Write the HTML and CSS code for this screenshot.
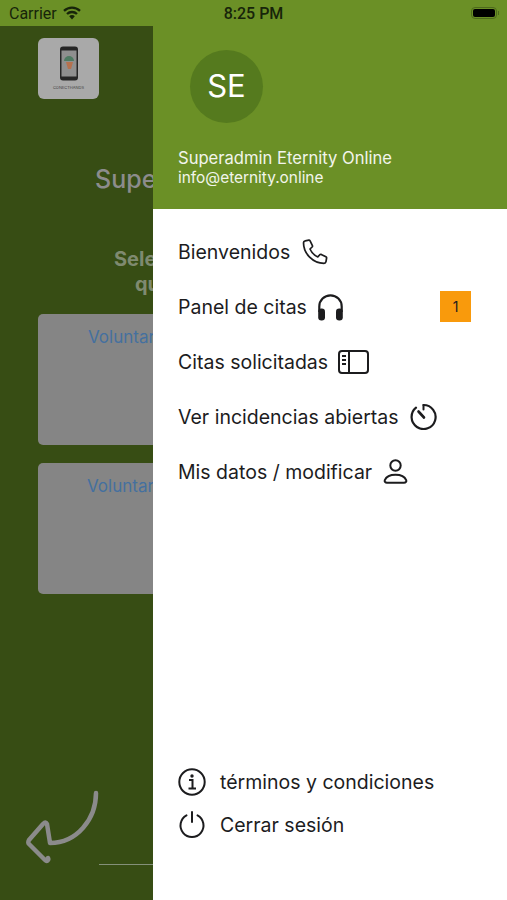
FILE: index.html
```html
<!DOCTYPE html>
<html lang="es">
<head>
    <meta charset="UTF-8">
    <meta name="viewport" content="width=device-width, initial-scale=1.0">
    <title>Menú</title>
    <link rel="stylesheet" href="styles.css">
</head>
<body>
    <div class="status">
        <div class="status-left">
            <span>Carrier</span>
            <svg class="wifi" width="18" height="14" viewBox="0 0 18 14">
                <path d="M1 4.8a11.5 11.5 0 0 1 16 0" fill="none" stroke="#17240a" stroke-width="2.3"/>
                <path d="M4 8a7.2 7.2 0 0 1 10 0" fill="none" stroke="#17240a" stroke-width="2.3"/>
                <path d="M6.2 10.3a3.6 3.6 0 0 1 5.6 0L9 13.6z" fill="#17240a"/>
            </svg>
        </div>
        <div class="status-time">8:25 PM</div>
        <div class="status-right">
            <div class="battery"><div class="battery-fill"></div></div>
            <div class="battery-cap"></div>
        </div>
    </div>

    <div class="main">
        <div class="behind">
            <div class="behind-inner">
                <div class="logo">
                    <svg width="20" height="35" viewBox="0 0 20 35">
                        <rect x="1" y="0.500" width="18" height="34" rx="3" fill="#262626"/>
                        <rect x="2.500" y="4.500" width="15" height="26" fill="#8f8f8f"/>
                        <path d="M5 15a5 5 0 0 1 10 0z" fill="#4e7a62"/>
                        <path d="M7 16h7l-2 7H9z" fill="#b5714e"/>
                    </svg>
                    <div class="logo-text">CONECTHANDS</div>
                </div>
                <h1 class="title">Supe</h1>
                <p class="subtitle">
                    <span class="subtitle-top">Sele</span>
                    <span class="subtitle-bottom">qu</span>
                </p>
                <div class="card"><span class="card-link">Voluntar</span></div>
                <div class="card card-second"><span class="card-link">Voluntar</span></div>
            </div>
            <svg class="back-arrow" width="80" height="75" viewBox="0 0 80 75">
                <path d="M71 4C71 30 52 54 25 54L22 35C21 33 20 33 18 35L4 51C3 53 3 54 4 55L20 71C22 73 24 71 23 69" fill="none" stroke="#8b8b8b" stroke-width="4.500" stroke-linecap="round" stroke-linejoin="round"/>
            </svg>
            <div class="bottom-line"></div>
        </div>

        <div class="drawer">
            <div class="drawer-head">
                <div class="avatar">SE</div>
                <div class="user-name">Superadmin Eternity Online</div>
                <div class="user-mail">info@eternity.online</div>
            </div>

            <div class="menu">
                <div class="menu-row">
                    <span>Bienvenidos</span>
                    <svg class="icon icon-far" width="26" height="26" viewBox="0 0 26 26">
                        <path d="M3.200 1.800 6.800 1.200c.6-.1 1 .2 1.300.7l2.300 4.700c.2.500.1 1-.3 1.400L8 10c1.500 3.500 4.300 6.300 7.800 7.900l2-2.200c.4-.4.900-.5 1.400-.3l4.700 2.300c.5.300.8.800.7 1.300l-.6 3.600c-.2 1-1 1.700-2 1.700C11 24.300 1.500 14.700 1.500 3.800c0-1 .7-1.800 1.700-2z" fill="none" stroke="#1c1c1e" stroke-width="1.700" stroke-linejoin="round"/>
                    </svg>
                </div>
                <div class="menu-row">
                    <span>Panel de citas</span>
                    <svg class="icon icon-close" width="27" height="28" viewBox="0 0 27 28">
                        <path d="M2.300 19V13.500a11.200 11.200 0 0 1 22.400 0V19" fill="none" stroke="#1c1c1e" stroke-width="2.200"/>
                        <rect x="1.200" y="15.500" width="6.800" height="12" rx="3.200" fill="#1c1c1e"/>
                        <rect x="19" y="15.500" width="6.800" height="12" rx="3.200" fill="#1c1c1e"/>
                    </svg>
                    <div class="badge">1</div>
                </div>
                <div class="menu-row">
                    <span>Citas solicitadas</span>
                    <svg class="icon icon-close" width="31" height="24" viewBox="0 0 31 24">
                        <rect x="1" y="1" width="29" height="22" rx="3" fill="none" stroke="#1c1c1e" stroke-width="2"/>
                        <path d="M11 1v22" stroke="#1c1c1e" stroke-width="2"/>
                        <path d="M4 6h4M4 10h4M4 14h4" stroke="#1c1c1e" stroke-width="1.800"/>
                    </svg>
                </div>
                <div class="menu-row">
                    <span>Ver incidencias abiertas</span>
                    <svg class="icon" width="27" height="27" viewBox="0 0 27 27">
                        <path d="M13.500 2a12 12 0 1 1-7.500 2.700" fill="none" stroke="#1c1c1e" stroke-width="2.200" stroke-linecap="round"/>
                        <path d="M13.500 2v4.500" stroke="#1c1c1e" stroke-width="2" stroke-linecap="round"/>
                        <path d="M8.500 8.500 14 14.500" stroke="#1c1c1e" stroke-width="2.600" stroke-linecap="round"/>
                    </svg>
                </div>
                <div class="menu-row">
                    <span>Mis datos / modificar</span>
                    <svg class="icon" width="25" height="25" viewBox="0 0 25 25">
                        <circle cx="12.500" cy="6.500" r="5.200" fill="none" stroke="#1c1c1e" stroke-width="2"/>
                        <path d="M4 23.800h17c1.800 0 2.800-1.300 2.200-2.700-1.400-3.300-5.500-5.300-10.700-5.300S3.200 17.800 1.800 21.100c-.6 1.400.4 2.700 2.200 2.700z" fill="none" stroke="#1c1c1e" stroke-width="2"/>
                    </svg>
                </div>
            </div>

            <div class="foot">
                <div class="foot-row">
                    <svg width="28" height="28" viewBox="0 0 28 28">
                        <circle cx="14" cy="14" r="12.700" fill="none" stroke="#1c1c1e" stroke-width="2"/>
                        <circle cx="14" cy="8" r="1.700" fill="#1c1c1e"/>
                        <path d="M11 12h3.500v8M10.500 20.500h7.500" fill="none" stroke="#1c1c1e" stroke-width="2"/>
                    </svg>
                    <span>términos y condiciones</span>
                </div>
                <div class="foot-row">
                    <svg width="28" height="28" viewBox="0 0 28 28">
                        <path d="M8.500 4.400a11.500 11.500 0 1 0 11 0" fill="none" stroke="#1c1c1e" stroke-width="2" stroke-linecap="round"/>
                        <path d="M14 1v10" stroke="#1c1c1e" stroke-width="2" stroke-linecap="round"/>
                    </svg>
                    <span>Cerrar sesión</span>
                </div>
            </div>
        </div>
    </div>
</body>
</html>
```

FILE: styles.css
```css
* {
    box-sizing: border-box;
}
body {
    font-family: Inter, "Liberation Sans", sans-serif;
    background-color: #6b9026;
    margin: 0;
    height: 900px;
    display: flex;
    flex-direction: column;
    overflow: hidden;
    color: #1c1c1e;
}
.status {
    height: 26px;
    flex-shrink: 0;
    display: flex;
    align-items: center;
    justify-content: space-between;
    padding: 0 8px 0 9px;
    position: relative;
    font-family: Roboto, sans-serif;
    font-size: 16px;
    color: #17240a;
}
.status-left {
    display: flex;
    align-items: center;
    gap: 6px;
}
.status-time {
    position: absolute;
    left: 0;
    right: 0;
    text-align: center;
    font-weight: 500;
}
.status-right {
    display: flex;
    align-items: center;
    gap: 1px;
}
.battery {
    width: 26px;
    height: 12px;
    border: 1px solid #4d6a1c;
    border-radius: 4px;
    padding: 1px;
}
.battery-fill {
    height: 100%;
    background: #000;
    border-radius: 2px;
}
.battery-cap {
    width: 1px;
    height: 4px;
    background: #4d6a1c;
}
.main {
    flex: 1;
    display: flex;
    min-height: 0;
}
.behind {
    width: 153px;
    flex-shrink: 0;
    background: #374d14;
    overflow: hidden;
    position: relative;
}
.behind-inner {
    padding: 12px 0 0 38px;
}
.logo {
    width: 61px;
    height: 61px;
    background: #a9a9a9;
    border-radius: 6px;
    display: flex;
    flex-direction: column;
    align-items: center;
    padding-top: 8px;
}
.logo-text {
    font-size: 4px;
    color: #444;
    margin-top: 4px;
}
.title {
    margin: 65px 0 0 57px;
    font-size: 25px;
    line-height: 30px;
    font-weight: 500;
    color: #8c8c8c;
    white-space: nowrap;
}
.subtitle {
    margin: 53px 0 0;
    font-size: 20px;
    line-height: 25px;
    font-weight: 700;
    color: #7f8a70;
    white-space: nowrap;
}
.subtitle-top {
    display: block;
    margin-left: 76px;
}
.subtitle-bottom {
    display: block;
    margin-left: 97px;
}
.card {
    height: 131px;
    background: #858585;
    border-radius: 5px 0 0 5px;
    margin-top: 17px;
    padding: 13px 0 0 50px;
    white-space: nowrap;
}
.card-second {
    margin-top: 18px;
    padding-left: 49px;
}
.card-link {
    font-size: 17px;
    color: #44709f;
}
.back-arrow {
    position: absolute;
    left: 25px;
    bottom: 36px;
}
.bottom-line {
    position: absolute;
    left: 99px;
    right: 0;
    bottom: 35px;
    height: 1px;
    background: #84907a;
}
.drawer {
    flex: 1;
    display: flex;
    flex-direction: column;
    background: #fff;
}
.drawer-head {
    height: 183px;
    background: #6b9026;
    padding: 24px 25px 0;
    color: #f2f5ec;
}
.avatar {
    width: 73px;
    height: 73px;
    margin-left: 12px;
    padding-bottom: 2px;
    border-radius: 50%;
    background: #557a1e;
    color: #fff;
    font-size: 31px;
    display: flex;
    align-items: center;
    justify-content: center;
}
.user-name {
    margin-top: 25px;
    font-size: 16.600px;
    line-height: 20px;
}
.user-mail {
    font-size: 15.400px;
    line-height: 20px;
}
.menu {
    padding: 15px 36px 0 25px;
}
.menu-row {
    height: 55px;
    display: flex;
    align-items: center;
    gap: 11px;
    font-size: 19.500px;
}
.icon {
    flex-shrink: 0;
}
.icon-far {
    margin-left: 1px;
}
.icon-close {
    margin-left: -1px;
}
.badge {
    margin-left: auto;
    width: 31px;
    height: 31px;
    background: #f99a0c;
    display: flex;
    align-items: center;
    justify-content: center;
    font-size: 14px;
}
.foot {
    margin-top: auto;
    padding: 0 25px 54px;
}
.foot-row {
    height: 43px;
    display: flex;
    align-items: center;
    gap: 14px;
    font-size: 19.500px;
}
```
